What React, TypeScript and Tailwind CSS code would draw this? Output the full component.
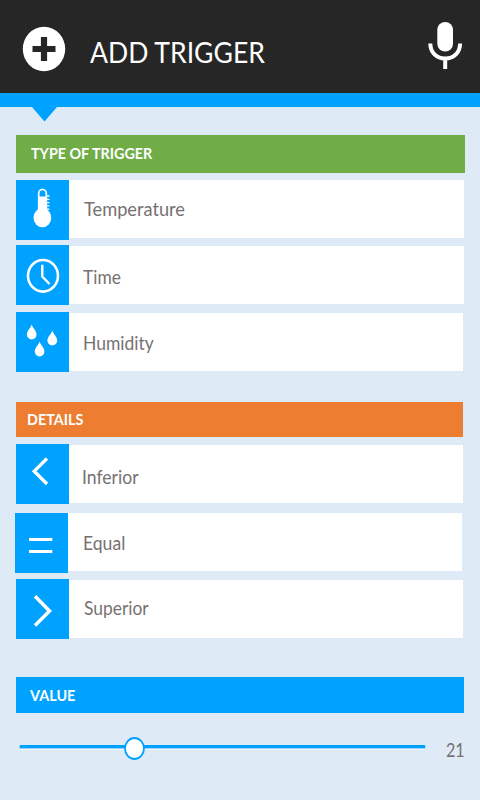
import type { ReactNode } from "react";

type RowProps = { label: string; icon: ReactNode; row: string; panel: string; text: string };

function Row({ label, icon, row, panel, text }: RowProps) {
  return (
    <button type="button" className={`flex h-[60px] items-start text-left ${row}`}>
      <span className="block h-[60px] w-[52.5px] shrink-0 bg-[#00a2ff]">{icon}</span>
      <span className={`block h-[58px] bg-white text-[18.5px] leading-[24px] text-[#767171] ${panel}`}>
        <span className={`inline-block origin-left whitespace-nowrap ${text}`}>{label}</span>
      </span>
    </button>
  );
}

function Svg({ children }: { children: ReactNode }) {
  return (
    <svg viewBox="0 0 52 60" className="block h-[60px] w-[52px]" fill="none" stroke="white">
      {children}
    </svg>
  );
}

const thermometer = (
  <Svg>
    <path d="M22.7 31V13.5a3.8 4 0 0 1 7.6 0V31" strokeWidth="1.7" />
    <path d="M22 16.5h9V31h-9z" fill="white" stroke="none" />
    <ellipse cx="26.4" cy="37.7" rx="8.9" ry="9.6" fill="white" stroke="none" />
    <path d="M30 16h3.5M30 19.3h3.5M30 22.6h3.5M30 25.9h3.5M30 29.2h3.5" strokeWidth="1.3" />
  </Svg>
);
const clock = (
  <Svg>
    <ellipse cx="27" cy="30.8" rx="15" ry="15.8" strokeWidth="2.6" />
    <path d="M26.3 19.8v11.7l7.2 7.5" strokeWidth="2.4" />
  </Svg>
);
const drops = (
  <Svg>
    <g fill="white" stroke="none">
      <path d="M15.7 12.5c1.3 4 4.8 6.3 4.8 10a4.8 5 0 0 1-9.6 0c0-3.7 3.5-6 4.8-10z" />
      <path d="M36.3 18.5c1.3 4 4.9 6.3 4.9 10a4.9 5 0 0 1-9.8 0c0-3.7 3.6-6 4.9-10z" />
      <path d="M23.6 29.5c1.3 4 4.8 6.3 4.8 10a4.8 5 0 0 1-9.6 0c0-3.7 3.5-6 4.8-10z" />
    </g>
  </Svg>
);
const less = <Svg><path d="M31 14.5 18.2 27.2 31 40" strokeWidth="3.3" /></Svg>;
const equal = <Svg><path d="M14 26.5h23.3M14 38.5h23.3" strokeWidth="3" /></Svg>;
const greater = <Svg><path d="M19 17.3 33.5 32 19 46.5" strokeWidth="3.5" /></Svg>;

export default function App() {
  return (
    <main className="h-[800px] w-[480px] overflow-hidden bg-[#deeaf6] font-[Lato,sans-serif]">
      <header className="flex h-[93px] items-start bg-[#262626] text-white">
        <svg viewBox="0 0 44 46" className="mt-[26px] ml-[22px] h-[46px] w-[44px] shrink-0">
          <ellipse cx="22" cy="23" rx="21.2" ry="22.3" fill="white" />
          <path d="M22 11v24M10.5 23h23" stroke="#262626" strokeWidth="6.2" />
        </svg>
        <h1 className="mt-[32px] ml-[24px] w-[330px] text-[29.5px] leading-[40px] whitespace-nowrap">
          <span className="inline-block origin-left scale-x-[.9]">ADD TRIGGER</span>
        </h1>
        <svg viewBox="0 0 36 50" className="mt-[21px] ml-[7px] h-[50px] w-[36px] shrink-0" fill="none" stroke="white">
          <rect x="10.3" y="1" width="15.7" height="29.5" rx="7.8" fill="white" stroke="none" />
          <path d="M3.3 22.5c0 9 6.2 15.1 14.9 15.1s14.9-6.1 14.9-15.1M18.2 37v11" strokeWidth="4" />
        </svg>
      </header>
      <div className="h-[14px] bg-[#00a2ff]" />
      <svg viewBox="0 0 25 15" className="ml-[31.5px] block h-[15px] w-[25px]" fill="#00a2ff">
        <path d="M0 0h25L12.5 14.5z" />
      </svg>

      <section>
        <h2 className="mt-[13px] ml-[15.5px] h-[38px] w-[449px] bg-[#70ad47] pl-[15px] text-[15.5px] leading-[37px] font-bold text-white">
          <span className="inline-block origin-left scale-x-[.925] whitespace-nowrap">TYPE OF TRIGGER</span>
        </h2>
        <Row label="Temperature" icon={thermometer} row="mt-[7px] ml-4" panel="w-[395px] pl-[15px] pt-[17px]" text="scale-x-[.985]" />
        <Row label="Time" icon={clock} row="mt-[5px] ml-4" panel="mt-px w-[395px] pl-[14px] pt-[19px]" text="scale-x-[.94]" />
        <Row label="Humidity" icon={drops} row="mt-[7px] ml-4" panel="mt-px w-[394px] pl-[14px] pt-[18px]" text="scale-x-[.945]" />
      </section>

      <section>
        <h2 className="mt-[30px] ml-[15.5px] h-[35px] w-[447.5px] bg-[#ed7d31] pl-[11.5px] text-[15.5px] leading-[34px] font-bold text-white">
          <span className="inline-block origin-left scale-x-[.925] whitespace-nowrap">DETAILS</span>
        </h2>
        <Row label="Inferior" icon={less} row="mt-[7px] ml-4" panel="mt-px w-[394px] pl-[13.5px] pt-[20px]" text="scale-x-95" />
        <Row label="Equal" icon={equal} row="mt-[9px] ml-[15px]" panel="w-[394px] pl-[15px] pt-[18px]" text="scale-x-95" />
        <Row label="Superior" icon={greater} row="mt-[6px] ml-4" panel="mt-px w-[394px] pl-[15px] pt-[16px]" text="scale-x-[.94]" />
      </section>

      <section>
        <h2 className="mt-[38px] ml-4 h-[36px] w-[448px] bg-[#00a2ff] pl-[14px] text-[15.5px] leading-[37px] font-bold text-white">
          <span className="inline-block origin-left scale-x-[.93] whitespace-nowrap">VALUE</span>
        </h2>
        <div className="mt-[23px] ml-[19px] flex items-start">
          <svg viewBox="0 0 407 26" className="h-[26px] w-[407px] shrink-0">
            <path d="M.7 10.8h405.5" stroke="#00a2ff" strokeWidth="3.4" />
            <path d="M.7 13.2h405.5" stroke="white" strokeWidth=".8" />
            <ellipse cx="115.5" cy="12.5" rx="9.5" ry="10.5" fill="white" stroke="#00a2ff" strokeWidth="1.8" />
          </svg>
          <span className="ml-[19.5px] inline-block origin-left scale-x-[.87] pt-[2px] text-[18.5px] leading-[24px] text-[#767171]">21</span>
        </div>
      </section>
    </main>
  );
}
